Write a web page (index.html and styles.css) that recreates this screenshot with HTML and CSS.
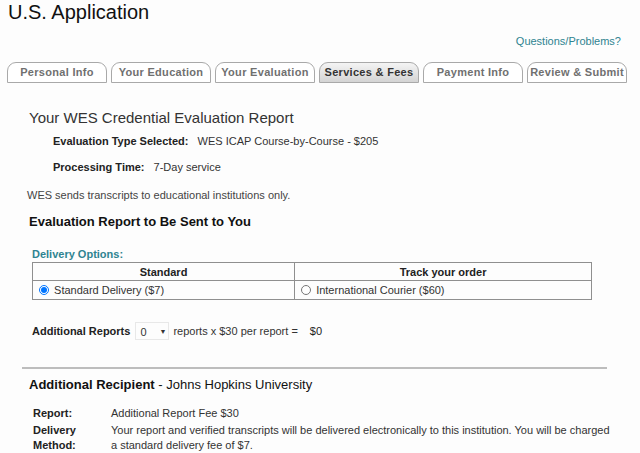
FILE: index.html
```html
<!DOCTYPE html>
<html lang="en">
<head>
  <meta charset="UTF-8">
  <title>U.S. Application</title>
  <link rel="stylesheet" href="styles.css">
</head>
<body>
  <h1 class="app-title">U.S. Application</h1>

  <div class="help-row">
    <a href="#" class="help-link">Questions/Problems?</a>
  </div>

  <!-- Step tabs -->
  <div class="tabs">
    <div class="tab">Personal Info</div>
    <div class="tab">Your Education</div>
    <div class="tab">Your Evaluation</div>
    <div class="tab active">Services &amp; Fees</div>
    <div class="tab">Payment Info</div>
    <div class="tab">Review &amp; Submit</div>
  </div>

  <div class="page">
    <h2 class="report-title">Your WES Credential Evaluation Report</h2>

    <div class="detail-line">
      <span class="detail-label">Evaluation Type Selected:</span>
      <span>WES ICAP Course-by-Course - $205</span>
    </div>
    <div class="detail-line">
      <span class="detail-label">Processing Time:</span>
      <span>7-Day service</span>
    </div>

    <p class="note">WES sends transcripts to educational institutions only.</p>

    <h3 class="section-title">Evaluation Report to Be Sent to You</h3>

    <div class="delivery">
      <div class="delivery-label">Delivery Options:</div>
      <table class="delivery-table">
        <tr>
          <th>Standard</th>
          <th>Track your order</th>
        </tr>
        <tr>
          <td><label><input type="radio" name="delivery" checked> Standard Delivery ($7)</label></td>
          <td><label><input type="radio" name="delivery"> International Courier ($60)</label></td>
        </tr>
      </table>
    </div>

    <div class="extra-reports">
      <span class="extra-label">Additional Reports</span>
      <span class="select-box">0 <span class="caret">&#9660;</span></span>
      <span>reports x $30 per report =</span>
      <span class="extra-total">$0</span>
    </div>

    <hr class="divider">

    <div class="recipient">
      <h3 class="recipient-title"><strong>Additional Recipient</strong> - Johns Hopkins University</h3>
      <div class="recipient-grid">
        <div class="recipient-label">Report:</div>
        <div>Additional Report Fee $30</div>
        <div class="recipient-label">Delivery Method:</div>
        <div>Your report and verified transcripts will be delivered electronically to this institution. You will be charged a standard delivery fee of $7.</div>
      </div>
    </div>
  </div>
</body>
</html>
```

FILE: styles.css
```css
body {
  margin: 0;
  background-color: #fdfdfd;
  font-family: "Liberation Sans", Arial, sans-serif;
  font-size: 11px;
  color: #333;
}

.app-title {
  margin: 0;
  padding: 1px 0 0 8px;
  font-size: 20px;
  font-weight: normal;
  line-height: 22px;
  color: #111;
}

.help-row {
  text-align: right;
  padding: 12px 19px 0 0;
  height: 16px;
}

.help-link {
  color: #2f8491;
  text-decoration: none;
  font-size: 11px;
}

/* Tabs */
.tabs {
  display: flex;
  gap: 4px;
  margin: 11px 0 0 7px;
  width: 620px;
}

.tab {
  flex: 1;
  height: 19px;
  line-height: 19px;
  text-align: center;
  border: 1px solid #a9a9a9;
  border-radius: 9px 9px 0 0;
  background-color: #fff;
  font-weight: bold;
  font-size: 11px;
  letter-spacing: 0.3px;
  color: #707070;
  white-space: nowrap;
}

.tab.active {
  background: linear-gradient(#f4f4f4, #d4d4d4);
  color: #333;
}

.page {
  padding: 0 0 0 27px;
}

.report-title {
  margin: 26px 0 0 2px;
  font-size: 15px;
  font-weight: normal;
  color: #333;
}

.detail-line {
  margin: 10px 0 0 26px;
  line-height: 16px;
}

.report-title + .detail-line {
  margin-top: 7px;
}

.detail-line span {
  margin-right: 6px;
}

.detail-label {
  font-weight: bold;
  color: #222;
}

.note {
  margin: 14px 0 0 0;
  color: #444;
}

.section-title {
  margin: 13px 0 0 2px;
  font-size: 13px;
  color: #111;
}

.delivery {
  margin: 19px 0 0 5px;
}

.delivery-label {
  font-weight: bold;
  color: #2f8491;
  margin-bottom: 2px;
}

.delivery-table {
  width: 560px;
  border-collapse: collapse;
}

.delivery-table th,
.delivery-table td {
  border: 1px solid #8f8f8f;
  padding: 1px 6px;
  height: 15px;
}

.delivery-table th {
  font-weight: bold;
  color: #222;
}

.delivery-table td {
  height: 16px;
}

.delivery-table input {
  margin: 0 2px 0 0;
  width: 10px;
  height: 10px;
  vertical-align: -1px;
}

.extra-reports {
  margin: 22px 0 0 5px;
  display: flex;
  align-items: center;
  gap: 4px;
  color: #333;
}

.extra-label {
  font-weight: bold;
  color: #222;
  margin-right: 1px;
}

.select-box {
  width: 26px;
  height: 15px;
  padding: 1px 2px 0 4px;
  border: 1px solid #e8e8e8;
  display: flex;
  justify-content: space-between;
  align-items: center;
}

.caret {
  font-size: 7px;
  color: #333;
}

.extra-total {
  margin-left: 8px;
  color: #222;
}

.divider {
  margin: 27px 0 0 -5px;
  width: 585px;
  border: none;
  border-top: 2px solid #bdbdbd;
}

.recipient {
  margin: 0 0 0 2px;
}

.recipient-title {
  margin: 8px 0 0 0;
  font-size: 13px;
  font-weight: normal;
  color: #111;
}

.recipient-grid {
  display: grid;
  grid-template-columns: 78px 500px;
  row-gap: 2px;
  margin: 14px 0 0 4px;
  line-height: 15px;
}

.recipient-label {
  font-weight: bold;
  color: #222;
  width: 50px;
}
```
